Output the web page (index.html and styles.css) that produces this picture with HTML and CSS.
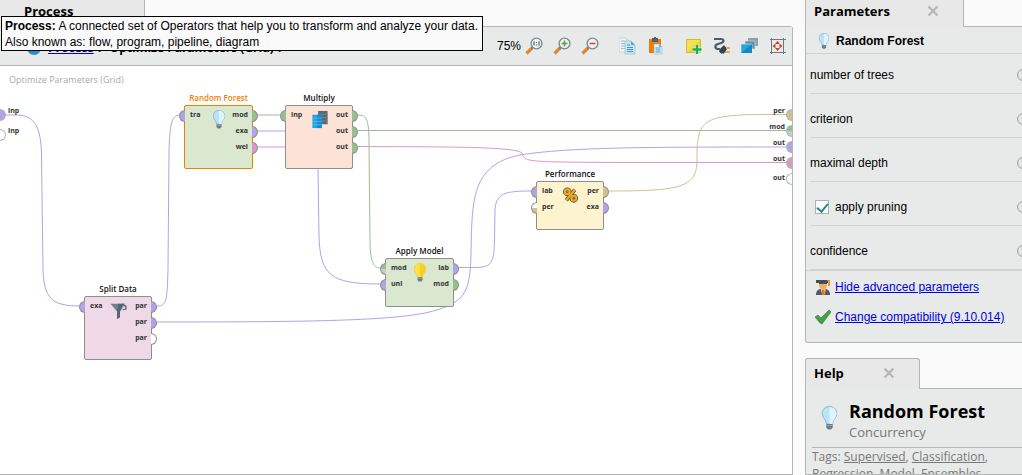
FILE: index.html
```html
<!DOCTYPE html>
<html lang="en">
<head>
<meta charset="utf-8">
<title>Process</title>
<link rel="stylesheet" href="styles.css">
</head>
<body>
<svg class="defs" aria-hidden="true">
  <symbol id="bulb" viewBox="0 0 16 24">
    <path class="bulb-glass" d="M8 .5C3.800.5.6 3.500.6 7.500c0 4.500 4 5.500 4.400 10.500h6c.4-5 4.400-6 4.400-10.500C15.400 3.500 12.200.5 8 .5z"/>
    <path class="bulb-shade" d="M8 1v17h3c.4-5 4-6 4-10.500C15 3.800 12 1 8 1z"/>
    <path fill="#6d7d86" d="M4.800 18h6.400v3.500L9.500 23.500h-3l-1.700-2z"/>
    <path stroke="#95a5ae" d="M5 19.500h6"/>
  </symbol>
  <symbol id="close" viewBox="0 0 12 12"><path d="M1.500 1.500l9 9M10.500 1.500l-9 9" stroke="#b4b6b5" stroke-width="2.200" fill="none"/></symbol>
  <symbol id="lens" viewBox="0 0 18 18">
    <path d="M1.500 16.500L7 11" stroke="#e0882a" stroke-width="3.200"/>
    <path d="M6.500 11.500l1.500-1.500" stroke="#66757e" stroke-width="2"/>
    <circle cx="11.500" cy="6.500" r="5.400" fill="#f0f2f2" stroke="#7c8b93" stroke-width="1.400"/>
  </symbol>
  <symbol id="info" viewBox="0 0 12 12"><circle cx="6" cy="6" r="5.400" fill="none" stroke="#999"/><path d="M6 5v4M6 2.500v1.200M4.500 5H6M4.500 9h3" stroke="#999" fill="none"/></symbol>
</svg>

<main class="workspace">
  <div class="tabs"><div class="tab process-tab">Process</div></div>
  <section class="editor">
    <header class="toolbar">
      <nav class="crumbs">
        <svg class="home" viewBox="0 0 14 14"><circle cx="7" cy="7" r="7" fill="#1d93d2"/><path d="M4 9l3-4 3 4z" fill="#fff"/></svg>
        <a href="#">Process</a><span class="arrow">▸</span><span>Optimize Parameters (Grid)</span><span class="arrow">▸</span>
      </nav>
      <div class="tools">
        <div class="group">
          <span class="percent">75%</span>
          <button aria-label="Actual size"><svg viewBox="0 0 18 18"><use href="#lens"/><path d="M9 4.500v4M14 4.500v4M11.500 5v1M11.500 7.500v1" stroke="#53616a" stroke-width="1.200"/></svg></button>
          <button aria-label="Zoom in"><svg viewBox="0 0 18 18"><use href="#lens"/><path d="M8.500 6.500h6M11.500 3.500v6" stroke="#5aa632" stroke-width="1.600"/></svg></button>
          <button aria-label="Zoom out"><svg viewBox="0 0 18 18"><use href="#lens"/><path d="M8.500 6.500h6" stroke="#d84a3c" stroke-width="1.600"/></svg></button>
        </div>
        <div class="group">
          <button aria-label="Copy"><svg viewBox="0 0 18 18"><path d="M0 1h6l4 3v11H0z" fill="#eef2f4" stroke="#b5c2ca" stroke-width=".6"/><path d="M2 4h4M2 6.500h5M2 9h5M2 11.500h5" stroke="#a9bac4"/><path d="M6 4h6l4 4v9H6z" fill="#c4e6f6" stroke="#8ab8cf" stroke-width=".6"/><path d="M12 4v4h4z" fill="#56a9d6"/><path d="M8 8h3M8 10.500h6M8 12.500h6M8 14.500h6" stroke="#4396c4"/></svg></button>
          <button aria-label="Paste"><svg viewBox="0 0 18 18"><path d="M2 2h12v14H2z" fill="#f07b0a"/><path d="M5 1h6v4H5z" fill="#52616b"/><path d="M7 0h2v2H7z" fill="#52616b"/><path d="M7 7h5l3 3v7H7z" fill="#dff0f8" stroke="#8ab8cf" stroke-width=".6"/><path d="M12 7v3h3z" fill="#69b3dc"/><path d="M8.500 11h5M8.500 13h5M8.500 15h5" stroke="#4e9cc8"/></svg></button>
        </div>
        <div class="group">
          <button aria-label="Add note"><svg viewBox="0 0 18 18"><path d="M1.500 2.500h14v13h-14z" fill="#f5e251" stroke="#d2b92f"/><path d="M2 15L15 3v12z" fill="#eed535"/><path d="M12 8v9M7.500 12.500h9" stroke="#e8f7e8" stroke-width="4"/><path d="M12 8v9M7.500 12.500h9" stroke="#20ac59" stroke-width="2.500"/></svg></button>
          <button aria-label="Auto-wire"><svg viewBox="0 0 18 18"><path d="M1 2h7c3 0 3.500 3 0 4L5 7c-4 1-3 5 0 5h2" fill="none" stroke="#4b5b66" stroke-width="2.200"/><path d="M7 12l4-4 3 4-3 4.500H8l-2-2z" fill="#34444f"/><path d="M13 11h4M12 15h5" stroke="#e8972e" stroke-width="1.600"/></svg></button>
          <button aria-label="Order"><svg viewBox="0 0 18 18"><path d="M7 1h10v8H7z" fill="#8ba1ae"/><path d="M4 4h10v8H4z" fill="#698b9f" stroke="#dce5e9" stroke-width=".6"/><path d="M0 7h11v9H0z" fill="#27a5e3" stroke="#dceef8" stroke-width=".6"/><path d="M0 16L11 7v9z" fill="#1587c6"/></svg></button>
          <button aria-label="Fit"><svg viewBox="0 0 18 18"><path d="M2.500 1v16M14.500 1v16M1 2.500h16M1 15.500h16" stroke="#6b7982"/><path d="M8.500 4l2.500 3H6zM8.500 14L6 11h5zM3.500 9l3-2.500v5zM13.500 9l-3-2.500v5z" fill="#cb3d2f"/><path d="M7.500 8h2v2h-2z" fill="#e8eae9"/></svg></button>
        </div>
      </div>
    </header>

    <div class="canvas">
      <svg class="wires" viewBox="0 66 792 409" width="792" height="409">
        <g class="violet">
          <path d="M5 115H18C34 116 41 126 41.500 155L43 270C44 298 52 306 79 306"/>
          <path d="M157 306C167 306 167 300 168 270L169 150C170 125 171 115 180 115"/>
          <path d="M157 322C300 322 385 321 425 313C466 304 470 292 471 255C472 200 471 165 520 155C570 147 650 147 790 147"/>
          <path d="M258 131H318V169L319 235C320 275 330 284 380 284"/>
          <path d="M458 267.500H477C492 267 494 262 494.500 240L495 210C496 193 505 191 532 191"/>
        </g>
        <g class="green">
          <path d="M258 115H280"/>
          <path d="M358 115C367 115 369 120 369 145L370 240C370 260 373 268 380 268"/>
          <path d="M358 130.500H790"/>
        </g>
        <g class="pink">
          <path d="M258 147H285"/>
          <path d="M358 146.500C430 147 515 146 522 153C524 162 525 162 620 162.500H790"/>
        </g>
        <path class="tan" d="M608 191C680 191 697 188 697 160C697 122 700 115 760 114.500H790"/>
      </svg>
      <span class="caption">Optimize Parameters (Grid)</span>

      <ul class="rim inputs">
        <li><i class="dot violet-fill"></i>inp</li>
        <li><i class="dot"></i>inp</li>
      </ul>
      <ul class="rim results">
        <li>per<i class="dot tan-fill"></i></li>
        <li>mod<i class="dot green-gray"></i></li>
        <li>out<i class="dot violet-fill"></i></li>
        <li>out<i class="dot pink-fill"></i></li>
        <li>out<i class="dot"></i></li>
      </ul>

      <article class="node wide forest">
        <h3>Random Forest</h3>
        <div class="box tall">
          <ul class="in"><li>tra<i class="port violet-fill"></i></li></ul>
          <svg class="glyph" viewBox="0 0 16 24"><use href="#bulb"/></svg>
          <ul class="out"><li>mod<i class="port green-fill"></i></li><li>exa<i class="port violet-fill"></i></li><li>wei<i class="port pink-fill"></i></li></ul>
        </div>
      </article>
      <article class="node multiply">
        <h3>Multiply</h3>
        <div class="box tall">
          <ul class="in"><li>inp<i class="port green-fill"></i></li></ul>
          <svg class="glyph" viewBox="0 0 18 20"><path d="M7 1h10v14H7z" fill="#576975"/><path d="M7 4.500h10M7 8h10M7 11.500h10" stroke="#71838e"/><path d="M1 5h10v14H1z" fill="#20a4e5"/><path d="M6 5h5v14H6z" fill="#138bd0"/><path d="M1 8.500h10M1 12h10M1 15.500h10" stroke="#79caf0" stroke-width=".6"/></svg>
          <ul class="out"><li>out<i class="port green-fill"></i></li><li>out<i class="port green-fill"></i></li><li>out<i class="port green-fill"></i></li></ul>
        </div>
      </article>
      <article class="node performance">
        <h3>Performance</h3>
        <div class="box">
          <ul class="in"><li>lab<i class="port violet-fill"></i></li><li>per<i class="port white-tan"></i></li></ul>
          <svg class="glyph" viewBox="0 0 18 20"><g fill="none" stroke="#4b5255" stroke-width="4"><circle cx="5" cy="6" r="2.500"/><circle cx="12" cy="13" r="2.500"/><path d="M13 4L4 15"/></g><g fill="none" stroke="#f4a91c" stroke-width="2.400"><circle cx="5" cy="6" r="2.500"/><circle cx="12" cy="13" r="2.500"/><path d="M13 4L4 15"/></g></svg>
          <ul class="out"><li>per<i class="port tan-fill"></i></li><li>exa<i class="port violet-fill"></i></li></ul>
        </div>
      </article>
      <article class="node wide apply">
        <h3>Apply Model</h3>
        <div class="box">
          <ul class="in"><li>mod<i class="port green-gray"></i></li><li>unl<i class="port violet-fill"></i></li></ul>
          <svg class="glyph lit" viewBox="0 0 16 24"><use href="#bulb"/></svg>
          <ul class="out"><li>lab<i class="port violet-fill"></i></li><li>mod<i class="port green-fill"></i></li></ul>
        </div>
      </article>
      <article class="node split">
        <h3>Split Data</h3>
        <div class="box tall">
          <ul class="in"><li>exa<i class="port violet-fill"></i></li></ul>
          <svg class="glyph" viewBox="0 0 18 20"><path d="M0 3h15l-5 8v6l-3 2v-8z" fill="#71828c"/><path d="M8 3h7l-5 8v6l-3 2v-8z" fill="#566771"/><path d="M13 3l4 2v4l-4 1z" fill="#61737d"/><circle cx="14" cy="7" r="1.500" fill="#f0d9e6"/></svg>
          <ul class="out"><li>par<i class="port violet-fill"></i></li><li>par<i class="port violet-fill"></i></li><li>par<i class="port"></i></li></ul>
        </div>
      </article>
    </div>
  </section>
  <div class="tooltip" role="tooltip"><b>Process:</b> A connected set of Operators that help you to transform and analyze your data.<br>Also known as: flow, program, pipeline, diagram</div>
</main>

<aside class="side">
  <section>
    <div class="tabs"><div class="tab params-tab">Parameters<button aria-label="Close Parameters"><svg viewBox="0 0 12 12"><use href="#close"/></svg></button></div></div>
    <div class="panel params">
      <h2><svg viewBox="0 0 16 24"><use href="#bulb"/></svg>Random Forest</h2>
      <ul class="rows">
        <li><span>number of trees</span><button aria-label="About number of trees"><svg viewBox="0 0 12 12"><use href="#info"/></svg></button></li>
        <li><span>criterion</span><button aria-label="About criterion"><svg viewBox="0 0 12 12"><use href="#info"/></svg></button></li>
        <li><span>maximal depth</span><button aria-label="About maximal depth"><svg viewBox="0 0 12 12"><use href="#info"/></svg></button></li>
        <li><label><input type="checkbox" checked>apply pruning</label><button aria-label="About apply pruning"><svg viewBox="0 0 12 12"><use href="#info"/></svg></button></li>
        <li><span>confidence</span><button aria-label="About confidence"><svg viewBox="0 0 12 12"><use href="#info"/></svg></button></li>
      </ul>
      <div class="links">
        <div><svg viewBox="0 0 16 16"><path d="M1 16c0-4 2-6 5-6h4c3 0 5 2 5 6z" fill="#4c5b66"/><path d="M5 9h6l-1 6H7z" fill="#f5b66e"/><path d="M7 11h2l1 5H7z" fill="#de7428"/><circle cx="8" cy="6" r="4" fill="#f1ae67"/><path d="M1 1h13v3h-2v1H4V4H1z" fill="#41505c"/><path d="M12 1h3v6h-2V3z" fill="#e99325"/></svg><a href="#">Hide advanced parameters</a></div>
        <div><svg viewBox="0 0 16 16"><path d="M0 8l3-2 3 3 8-8 2 2-9 12-2-1z" fill="#43a047" stroke="#2f8138" stroke-width=".6"/></svg><a href="#">Change compatibility (9.10.014)</a></div>
      </div>
    </div>
  </section>
  <section class="help">
    <div class="tabs"><div class="tab help-tab">Help<button aria-label="Close Help"><svg viewBox="0 0 12 12"><use href="#close"/></svg></button></div></div>
    <div class="panel help-body">
      <header><svg viewBox="0 0 16 24"><use href="#bulb"/></svg><div><h1>Random Forest</h1><p>Concurrency</p></div></header>
      <p class="tags">Tags: <a href="#">Supervised</a>, <a href="#">Classification</a>, <a href="#">Regression</a>, <a href="#">Model</a>, <a href="#">Ensembles</a></p>
    </div>
  </section>
</aside>
</body>
</html>
```

FILE: styles.css
```css
* { box-sizing: border-box; }
body {
  margin: 0;
  height: 100vh;
  display: flex;
  gap: 12px;
  overflow: hidden;
  background: #fafafa;
  color: #000;
  font: 12px/16px "Liberation Sans", Arial, sans-serif;
  --glass: #b9e4f7;
  --glass-edge: #8fb2c0;
  --shade: #def3fb;
}
ul { list-style: none; margin: 0; padding: 0; }
h1, h2, h3, p { margin: 0; }
button { border: 0; padding: 0; background: none; display: flex; }
a { color: #0000e6; }
.defs { position: absolute; width: 0; height: 0; }
.bulb-glass { fill: var(--glass); stroke: var(--glass-edge); stroke-width: 1; }
.bulb-shade { fill: var(--shade); }
.lit { --glass: #fde14a; --glass-edge: #f0cf3a; --shade: #f8cf1f; }

.tabs { display: flex; height: 26px; }
.tab {
  display: flex;
  align-items: center;
  height: 27px;
  padding-bottom: 5px;
  background: #e8e8e8;
  border-right: 1px solid #b4b6b5;
  font: bold 13px/16px "Open Sans", sans-serif;
  position: relative;
  z-index: 1;
}
.tab svg { width: 12px; height: 12px; }

.workspace { flex: 1; min-width: 0; display: flex; flex-direction: column; position: relative; }
.process-tab { width: 145px; padding-left: 24px; }
.editor {
  flex: 1;
  display: flex;
  flex-direction: column;
  border: 1px solid #b4b6b5;
  border-left: 0;
  border-top-right-radius: 3px;
  background: #fff;
  min-height: 0;
}
.toolbar {
  height: 39px;
  display: flex;
  align-items: center;
  justify-content: space-between;
  padding: 0 5px 0 27px;
  background: #e8eae9;
  border-bottom: 1px solid #b4b6b5;
}
.crumbs { display: flex; align-items: center; padding-top: 4px; font: bold 12px/18px "Open Sans", sans-serif; white-space: nowrap; }
.home { width: 14px; height: 14px; margin-right: 7px; }
.arrow { width: 16px; text-align: center; font-size: 10px; }
.tools, .group { display: flex; align-items: center; }
.tools { gap: 20px; }
.group { gap: 10px; }
.group svg { width: 18px; height: 18px; }
.percent { margin-right: -6px; }

.tooltip {
  position: absolute;
  left: 1px;
  top: 16px;
  z-index: 3;
  padding: 1px 4px 0 3px;
  border: 1px solid #000;
  background: #fafafa;
  white-space: nowrap;
}

.canvas { position: relative; flex: 1; overflow: hidden; font: bold 7px/16px "Open Sans", sans-serif; color: #333; }
.wires { position: absolute; left: 0; top: 0; fill: none; stroke-width: 1; }
.violet { stroke: #b0a3e6; }
.green { stroke: #98c08f; }
.pink { stroke: #dc99c4; }
.tan { stroke: #cdc391; }
.caption { position: absolute; left: 9px; top: 6px; font-size: 9px; font-weight: 400; color: #aaa; }

.node { position: absolute; width: 68px; }
.wide { width: 69px; }
.node h3 { font-size: 8px; line-height: 14px; font-weight: 600; text-align: center; color: #111; white-space: nowrap; }
.box { display: flex; justify-content: space-between; height: 49px; padding: 1px 4px 0 5px; border: 1px solid #8e8e8e; border-radius: 2px; }
.tall { height: 64px; }
.glyph { width: 18px; height: 19px; margin-top: 3px; }
.in, .out { width: 18px; }
.out { text-align: right; }
.in li, .out li { position: relative; height: 16px; }
.port { position: absolute; top: 3px; width: 6px; height: 12px; border: 1px solid #8e8e8e; background-color: #fff; }
.in .port { left: -11px; border-right: 0; border-radius: 6px 0 0 6px; }
.out .port { right: -10px; border-left: 0; border-radius: 0 6px 6px 0; }
.canvas .violet-fill { background: #b0a3e6; }
.canvas .green-fill { background: #98c08f; }
.canvas .pink-fill { background: #dc99c4; }
.canvas .tan-fill { background: #cdc391; }
.canvas .green-gray { background: linear-gradient(#98c08f 50%, #ccc 50%); }
.canvas .white-tan { background: linear-gradient(#fff 50%, #cdc391 50%); }
.forest { left: 184px; top: 25px; }
.forest h3 { color: #f08000; }
.forest .box { background: #d9e8cf; border-color: #f08000; }
.multiply { left: 285px; top: 25px; }
.multiply .box { background: #fde3d6; }
.performance { left: 536px; top: 101px; }
.performance .box { background: #fdf4cf; }
.apply { left: 385px; top: 178px; }
.apply .box { background: #d9e8cf; }
.split { left: 84px; top: 216px; }
.split .box { background: #f0d9e6; }

.rim { position: absolute; }
.rim li { display: flex; height: 16px; }
.inputs { left: 0; top: 37px; }
.inputs li { height: 20px; }
.results { right: 0; top: 37px; }
.results li { justify-content: flex-end; }
.results li:last-child { line-height: 22px; }
.dot { width: 6px; height: 12px; margin-top: 6px; border: 1px solid #b4b4b4; background-color: #fff; }
.inputs .dot { border-left: 0; border-radius: 0 6px 6px 0; margin-right: 2px; }
.results .dot { border-right: 0; border-radius: 6px 0 0 6px; margin-left: 1px; }

.side { flex: 0 0 217px; display: flex; flex-direction: column; gap: 15px; }
.params-tab { width: 159px; padding-left: 8px; gap: 37px; border-left: 1px solid #b4b6b5; }
.panel { background: #e8eae9; border: 1px solid #b4b6b5; border-right: 0; }
.params { border-radius: 0 0 0 3px; }
.params h2 { display: flex; align-items: center; gap: 5px; height: 27px; padding: 2px 0 0 11px; font-size: 12px; line-height: 16px; border-bottom: 1px solid #d2d4d3; }
.params h2 svg { width: 14px; height: 16px; }
.rows { padding-left: 4px; overflow: hidden; border-bottom: 1px solid #d2d4d3; }
.rows li { display: flex; align-items: center; justify-content: space-between; height: 44px; padding-top: 6px; border-bottom: 1px solid #d2d4d3; }
.rows li:first-child { height: 40px; padding-top: 2px; }
.rows button { margin-right: -7px; }
.rows button svg { width: 12px; height: 12px; }
.rows label { display: flex; align-items: center; gap: 6px; padding-left: 5px; }
.rows input { appearance: none; width: 14px; height: 14px; margin: 0; background: #fff; border: 1px solid #b0b2b1; }
.rows input:checked::after {
  content: "";
  display: block;
  width: 5px;
  height: 9px;
  margin: 0 auto;
  border: solid #1d9080;
  border-width: 0 2px 2px 0;
  transform: rotate(40deg);
}
.links { display: grid; gap: 14px; padding: 8px 0 17px 9px; white-space: nowrap; }
.links div { display: flex; gap: 4px; }
.links svg { width: 16px; height: 16px; }

.help { flex: 1; display: flex; flex-direction: column; min-height: 0; }
.help .tabs { height: 30px; flex: none; }
.help-tab { height: 31px; width: 115px; padding: 0 0 2px 8px; gap: 39px; border: 1px solid #b4b6b5; border-bottom: 0; border-radius: 3px 3px 0 0; }
.help-body { flex: 1; min-height: 0; overflow: hidden; padding: 9px 0 0 6px; font: 13px/16px "Open Sans", sans-serif; color: #777; }
.help-body header { display: flex; gap: 11px; padding: 0 0 7px 9px; border-bottom: 1px solid #b4b6b5; }
.help-body header svg { width: 17px; height: 24px; margin-top: 8px; }
.help-body h1 { font-size: 18px; line-height: 26px; color: #000; }
.help-body a { color: #777; }
.help-body .tags { font-size: 12px; line-height: 17px; }
```
